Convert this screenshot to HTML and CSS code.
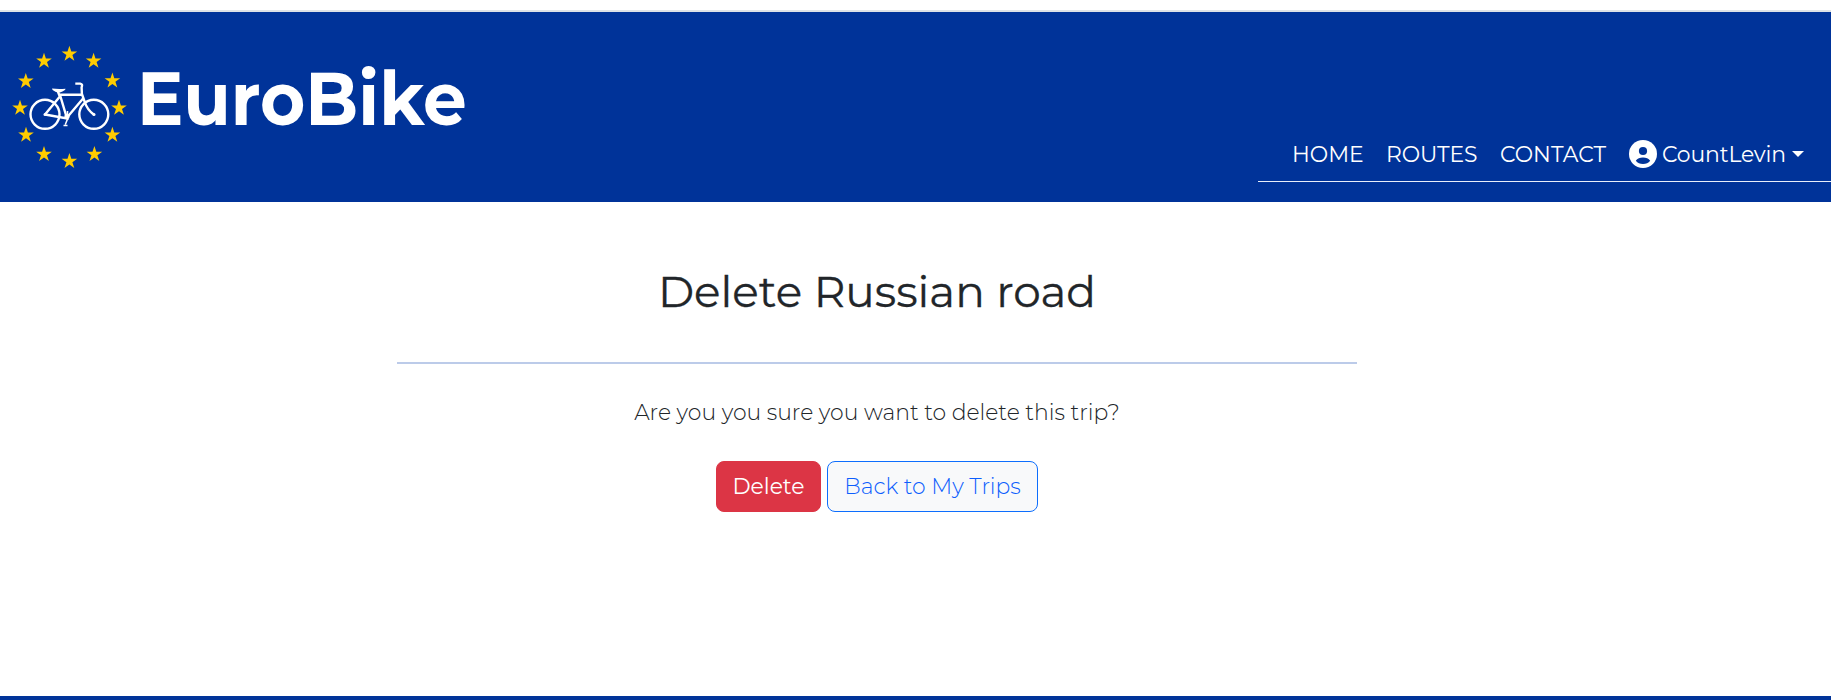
FILE: index.html
```
<!DOCTYPE html>
<html lang="en">
<head>
<meta charset="utf-8">
<title>EuroBike</title>
<link rel="stylesheet" href="styles.css">
</head>
<body>
<header class="header">
  <a class="brand">
    <svg class="logo" width="128" height="128" viewBox="10 42 128 128">
      <defs><path id="star" d="M0-8.3 1.9-2.6H7.8L3 .9 4.9 6.8 0 3.2-4.9 6.8-3 .9-7.8-2.6H-1.9Z"/></defs>
      <g fill="#fc0">
        <use href="#star" x="69.4" y="54"/><use href="#star" x="93.6" y="61"/>
        <use href="#star" x="112.4" y="80.8"/><use href="#star" x="119" y="108"/>
        <use href="#star" x="112.4" y="135"/><use href="#star" x="94.4" y="154.3"/>
        <use href="#star" x="69.4" y="161.3"/><use href="#star" x="44" y="154.3"/>
        <use href="#star" x="26" y="135"/><use href="#star" x="20" y="108"/>
        <use href="#star" x="25.8" y="81.2"/><use href="#star" x="44" y="61"/>
      </g>
      <g fill="none" stroke="#fff" stroke-width="2.4">
        <circle cx="45" cy="114.3" r="14.5"/><circle cx="93.8" cy="114.3" r="14.5"/>
        <path d="M45 114.5 60.3 96 67 118.5 45 114.5M57.5 90.5 60 97M60 94.7H83M67 117.5 83.5 98M75.3 83.6H80.2Q83 84 81.6 87.5L81.9 94 84.8 102Q87 109.5 94 114.8"/>
        <path d="M67.5 111V119L65.3 124.5M63.5 125.4H67.5" stroke-width="1.5"/>
      </g>
      <path fill="#fff" d="M52 88.6Q58 89.4 65.5 88.8 65.5 90.6 60 92.6 56 92.8 52.6 90Z"/>
      <circle cx="67" cy="116.5" r="2.6" fill="#fff"/><circle cx="45" cy="114.4" r="1.5" fill="#fff"/><circle cx="94" cy="114.6" r="1.5" fill="#fff"/>
    </svg>
    <span class="brand-name">EuroBike</span>
  </a>
  <nav class="nav">
    <a class="nav-link home">HOME</a>
    <a class="nav-link routes">ROUTES</a>
    <a class="nav-link contact">CONTACT</a>
    <a class="nav-link user">
      <svg class="avatar" width="28" height="28" viewBox="0 0 28 28"><circle cx="14" cy="14" r="14" fill="#fff"/><circle cx="14" cy="11" r="4.1" fill="#039"/><path d="M6.8 20.7Q9.2 17.6 14 17.6T21.2 20.7Q18.6 23.9 14 23.9T6.8 20.7Z" fill="#039"/></svg>
      <span class="user-name">CountLevin</span>
      <span class="caret"></span>
    </a>
  </nav>
</header>
<main class="content">
  <h1 class="title">Delete Russian road</h1>
  <hr class="rule">
  <p class="question">Are you you sure you want to delete this trip?</p>
  <div class="actions">
    <button class="btn btn-delete">Delete</button>
    <button class="btn btn-back">Back to My Trips</button>
  </div>
</main>
<footer class="footer"></footer>
</body>
</html>
```
FILE: styles.css
```
* { box-sizing: border-box; }
body {
  margin: 0;
  height: 700px;
  padding-top: 10px;
  display: flex;
  flex-direction: column;
  overflow: hidden;
  background: #fff;
  color: #212529;
  font-family: Montserrat, Inter, sans-serif;
  font-size: 21.9px;
  font-weight: 300;
}
.header {
  height: 192px;
  border-top: 2px solid #dee2e6;
  background: #039;
  color: #fff;
  display: flex;
  justify-content: space-between;
}
.brand { display: flex; padding: 30px 0 0 10px; }
.logo { flex: none; }
.brand-name {
  margin-left: -1.5px;
  font-size: 75.5px;
  font-weight: 700;
  line-height: 112px;
  white-space: nowrap;
  transform: scaleX(0.917);
  transform-origin: 0 0;
}
.nav {
  width: 573px;
  height: 170px;
  padding: 0 26px 11px 34px;
  border-bottom: 1px solid #e8eefa;
  display: flex;
  align-items: flex-end;
  font-weight: 400;
}
.nav-link { line-height: 32px; white-space: nowrap; }
.home { width: 94px; }
.routes { width: 114px; letter-spacing: -0.1px; }
.contact { width: 129px; }
.user { display: flex; align-items: center; height: 32px; }
.avatar { margin-right: 5px; }
.user-name { width: 130px; letter-spacing: -0.15px; }
.caret {
  border-top: 6px solid #fff;
  border-left: 6px solid transparent;
  border-right: 6px solid transparent;
}
.content {
  flex: 1;
  width: 960px;
  margin-left: 397px;
  text-align: center;
}
.title {
  margin: 60px 0 0;
  font-size: 43.8px;
  font-weight: 400;
  -webkit-text-stroke: 0.3px #212529;
  line-height: 60px;
  white-space: nowrap;
}
.rule { height: 2px; margin: 40px 0 0; border: 0; background: #bccbe9; }
.question { margin: 31px 0 0; line-height: 34px; }
.actions { margin-top: 32px; display: flex; justify-content: center; gap: 6px; }
.btn {
  height: 51px;
  padding: 0 0 2px;
  border: 1px solid #dc3545;
  border-radius: 8px;
  font: inherit;
  white-space: nowrap;
}
.btn-delete { width: 105px; background: #dc3545; color: #fff; font-weight: 400; }
.btn-back { width: 211px; background: #f8f9fa; border-color: #0d6efd; color: #0d5efd; }
.footer { height: 4px; background: #039; }
```
